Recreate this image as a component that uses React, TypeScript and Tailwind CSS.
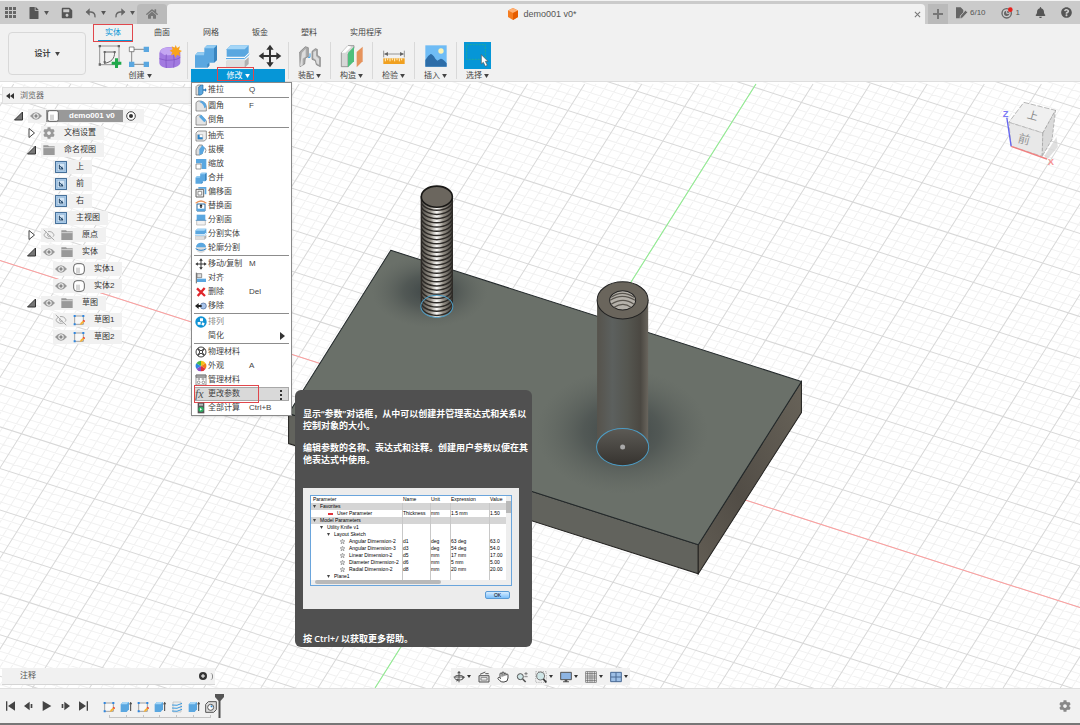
import type { ReactNode } from "react";
import { FaHome, FaBell, FaQuestionCircle, FaSave, FaCog, FaFile } from "react-icons/fa";
import { EyeOff, Hand } from "lucide-react";

const BLUE = "#5aa7e0";
const DARK = "#555";

function Caret() {
  return (
    <svg viewBox="0 0 6 5" className="w-[5px] h-1 shrink-0 fill-current" aria-hidden="true">
      <path d="M0 0h6L3 5z" />
    </svg>
  );
}

function Icon({ size = "w-6 h-6", box = 72, children }: { size?: string; box?: number; children: ReactNode }) {
  return (
    <svg viewBox={`0 0 ${box} ${box}`} className={`${size} shrink-0`} fill="none" aria-hidden="true">
      {children}
    </svg>
  );
}

/* ---------- top bar ---------- */

function TopBar() {
  return (
    <div className="bg-[#cbcbcb] border-t border-[#f3f3f3] flex h-6 pr-0.5 text-[#555] text-[8px]">
      <div className="flex items-center w-[137px] shrink-0 pl-[5px]">
        <button aria-label="Data panel" className="w-[11px]">
          <svg viewBox="0 0 11 11" className="w-[11px] h-[11px]" fill="#666">
            {[0, 4, 8].map((x) => [0, 4, 8].map((y) => <rect key={`${x}-${y}`} x={x} y={y} width="3" height="3" />))}
          </svg>
        </button>
        <button aria-label="File" className="flex items-center gap-1 ml-3">
          <FaFile size={12} />
          <Caret />
        </button>
        <button aria-label="Save" className="ml-3"><FaSave size={12} /></button>
        <button aria-label="Undo" className="flex items-center gap-1 ml-3">
          <Icon size="w-3 h-3" box={36}>
            <path d="M4 15h14q13 1 12 16" stroke="#666" strokeWidth="4" />
            <path d="M2 15L14 4v22z" fill="#666" />
          </Icon>
          <Caret />
        </button>
        <button aria-label="Redo" className="flex items-center gap-1 ml-2">
          <Icon size="w-3 h-3" box={36}>
            <path d="M32 15H18Q5 16 6 31" stroke="#666" strokeWidth="4" />
            <path d="M34 15L22 4v22z" fill="#666" />
          </Icon>
          <Caret />
        </button>
      </div>
      <button aria-label="Home" className="bg-[#bababa] w-[30px] mt-[3px] flex items-center justify-center text-[#777] rounded-t-sm">
        <FaHome size={12} />
      </button>
      <div className="bg-[#f1f1f1] flex-1 mt-[3px] flex items-center rounded-t-sm">
        <div className="flex-1 flex items-center justify-center gap-1 pl-2 text-[9px] text-[#555]">
          <svg viewBox="0 0 12 12" className="w-3 h-3">
            <path d="M6 0l5 2.5v6.5L6 12 1 9V2.5z" fill="#f57c1f" />
            <path d="M6 0l5 2.5L6 5 1 2.5z" fill="#ffb074" />
            <path d="M6 5l5-2.5V9L6 12z" fill="#e65c00" />
          </svg>
          demo001 v0*
        </div>
        <button aria-label="Close" className="w-4 flex justify-center">
          <svg viewBox="0 0 8 8" className="w-[7px] h-[7px]" stroke="#777" strokeWidth="1.2"><path d="M1 1l6 6M7 1L1 7" /></svg>
        </button>
      </div>
      <button aria-label="New design" className="bg-[#bababa] w-5 mt-[3px] ml-[3px] flex items-center justify-center">
        <svg viewBox="0 0 10 10" className="w-[10px] h-[10px]" fill="#777"><path d="M4 0h2v4h4v2H6v4H4V6H0V4h4z" /></svg>
      </button>
      <div className="flex items-center w-[130px] shrink-0 pl-2 pr-1.5 justify-between">
        <span className="flex items-center gap-0.5">
          <svg viewBox="0 0 36 36" className="w-3 h-3" fill="#666">
            <path d="M0 1h14l8 8v8L12 27v7H0z" />
            <path d="M28 10l7 6-16 17-7 2 1-8z" stroke="#cbcbcb" strokeWidth="2" />
          </svg>
          6/10
        </span>
        <span className="flex items-center gap-[3px]">
          <svg viewBox="0 0 36 36" className="w-3 h-3" fill="none">
            <circle cx="17" cy="19" r="14" stroke="#666" strokeWidth="4" />
            <circle cx="17" cy="19" r="8" fill="#666" />
            <path d="M17 11v8h8" stroke="#cbcbcb" strokeWidth="3" />
            <circle cx="28" cy="8" r="7" fill="#e8211d" />
          </svg>
          1
        </span>
        <button aria-label="Notifications"><FaBell size={11} /></button>
        <button aria-label="Help"><FaQuestionCircle size={11} /></button>
      </div>
    </div>
  );
}

/* ---------- toolbar icons ---------- */

const SketchIcon = () => (
  <Icon>
    <path d="M5 6h58v56H5z" stroke="#666" strokeWidth="2" />
    <path d="M20 60V24h30c0 20-10 30-30 34" stroke="#666" strokeWidth="3" />
    <path d="M2 3h7v7H2zM59 3h7v7h-7zM2 58h7v7H2zM17 21h6v6h-6zM47 21h6v6h-6zM17 51h6v6h-6z" fill="#666" />
    <path d="M51 43h9v10h10v9H60v10h-9V62H41v-9h10z" fill="#1fa84a" />
  </Icon>
);

const FormEdgeIcon = () => (
  <Icon>
    <path d="M11 16h44M11 16v45h44" stroke="#555" strokeWidth="2" />
    <path d="M4 9h14v14H4z" fill="#fff" stroke="#555" strokeWidth="2" />
    <path d="M47 8h16v16H47zM3 53h16v16H3zM47 53h16v16H47z" fill={BLUE} />
  </Icon>
);

const PurpleIcon = () => (
  <Icon>
    <path d="M4 28Q6 14 20 11q14-4 30 0 14 3 17 14v32q-2 8-14 12-16 5-32 2Q6 68 4 58z" fill="#a27ae0" />
    <path d="M6 24Q10 13 22 11q14-3 28 0 10 2 15 10l-12 10q-16 4-34 2z" fill="#c4a6f2" />
    <path d="M4 44q20 8 40 4 14-1 23-8M25 31q-2 20 0 41M47 31q3 20 0 40" stroke="#7b50c0" strokeWidth="2" />
    <path d="M53 3l4 9 9-5-3 10 9 4-9 5 4 10-10-4-5 9-4-10-9 3 4-9-8-5 9-4-3-9 9 4z" fill="#f9a31b" />
  </Icon>
);

const CombineShape = () => (
  <>
    <path d="M31 12l8-8h30v44l-9 8H46v9l-6 6H3V34l8-9h20z" fill={BLUE} />
    <path d="M31 12l8-8h30l-9 9H31zM3 34l8-9h20l-1 9z" fill="#93ccf2" />
    <path d="M60 13l9-9v44l-9 8zM40 71l6-6v-9l-6 5z" fill="#3a85bf" />
  </>
);

const SplitShape = () => (
  <>
    <path d="M2 16L14 4h54v22L56 38H2z" fill={BLUE} />
    <path d="M2 16L14 4h54L56 16z" fill="#a5d6f7" />
    <path d="M2 50h54l12-10v20L56 71H2z" fill="#b0b0b0" />
    <path d="M2 50h54v21H2z" fill="#dedede" />
    <path d="M0 44h56l14-13" stroke="#fff" strokeWidth="7" />
    <path d="M0 44h56l14-13" stroke="#3c9be0" strokeWidth="3" />
  </>
);

const MoveShape = () => (
  <path
    d="M36 2l11 15h-8v16h16v-8l15 11-15 11v-8H39v16h8L36 70 25 55h8V39H17v8L2 36l15-11v8h16V17h-8z"
    fill="#333"
  />
);

const AssembleIcon = () => (
  <Icon>
    <path d="M5 24L22 8l9 3v27l-9 4-2 18-14 8z" fill="#aaa" stroke="#777" strokeWidth="2" />
    <path d="M12 26l11-12v24l-9 6v20l-8 3z" fill="#dcdcdc" />
    <path d="M42 22l10-8 6 2v18l9 6v28l-12-6-3-12-10-4z" fill="#aaa" stroke="#777" strokeWidth="2" />
    <path d="M46 24l8-4v16l9 8v18l-7-4-2-10-8-6z" fill="#dcdcdc" />
    <path d="M30 40h6V28" stroke="#3c9be0" strokeWidth="3" />
  </Icon>
);

const ConstructIcon = () => (
  <Icon>
    <path d="M4 26L24 5h18v8L24 30v38H4z" fill="#d7d7d7" stroke="#777" strokeWidth="2" />
    <path d="M24 5L4 26h12L34 8z" fill="#fff" />
    <path d="M24 26L42 8v44L24 70z" fill="#4fbf7c" />
    <path d="M50 24L68 8v44L50 70z" fill="#e6935c" />
  </Icon>
);

const InspectIcon = () => (
  <Icon>
    <path d="M5 20v20M67 20v20M8 30h56" stroke="#666" strokeWidth="2" />
    <path d="M6 30l12-6v12zM66 30l-12-6v12z" fill="#666" />
    <path d="M4 43h64v17H4z" fill="#f0a020" />
    <path d="M10 43v9M17 43v6M24 43v9M31 43v6M38 43v9M45 43v6M52 43v9M59 43v6" stroke="#fff3c8" strokeWidth="3" />
  </Icon>
);

const InsertIcon = () => (
  <Icon>
    <path d="M4 4h64v64H4z" fill="#6fbcf5" />
    <path d="M4 48q8-14 16-18 6 0 14 14l6 6 10-6q8 0 18 14v10H4z" fill="#2d6da8" />
    <circle cx="51" cy="21" r="8" fill="#fdf3b4" />
  </Icon>
);

const SelectIcon = () => (
  <span className="bg-[#0696d7] w-[27px] h-[27px] shrink-0">
    <Icon size="w-[27px] h-[27px]" box={81}>
      <path d="M8 8h56v44H8z" stroke="#2eb37d" strokeWidth="2" strokeDasharray="6 3" />
      <path d="M52 38v28l6-5 6 12 6-3-6-12h8z" fill="#fff" stroke="#555" strokeWidth="2" />
    </Icon>
  </span>
);

/* ---------- modify menu ---------- */

type MenuEntry = { label: string; keys?: string; icon?: ReactNode; disabled?: boolean; sub?: boolean; active?: boolean };

const OUT = "#666";

const menuGroups: MenuEntry[][] = [
  [
    {
      label: "推拉",
      keys: "Q",
      icon: (
        <>
          <path d="M3 8l5-5h10v26l-5 4H3z" fill="#ddd" stroke={OUT} strokeWidth="2" />
          <path d="M11 9l8-6h5v25l-6 5h-7z" fill={BLUE} stroke="#27699c" strokeWidth="2" />
          <path d="M24 16h6v-4l5 6-5 6v-4h-6z" fill="#2a78b8" />
        </>
      ),
    },
  ],
  [
    {
      label: "圆角",
      keys: "F",
      icon: (
        <>
          <path d="M3 33V8l6-5h8q16 3 17 18v12z" fill="#e4e4e4" stroke={OUT} strokeWidth="2" />
          <path d="M13 6l6-4q15 4 15 19l-6 4Q27 11 13 6z" fill={BLUE} />
        </>
      ),
    },
    {
      label: "倒角",
      icon: (
        <>
          <path d="M3 33V8l6-5h8l17 18v12z" fill="#e4e4e4" stroke={OUT} strokeWidth="2" />
          <path d="M12 8l7-6 15 17-6 6z" fill={BLUE} />
        </>
      ),
    },
  ],
  [
    {
      label: "抽壳",
      icon: (
        <>
          <path d="M3 9l6-6h25v24l-6 6H3z" fill="#eee" stroke={OUT} strokeWidth="2" />
          <path d="M8 14h15v14H8z" fill="#fff" stroke={OUT} />
          <path d="M8 14h6v8h9v6H8z" fill="#2a82c8" />
        </>
      ),
    },
    {
      label: "拔模",
      icon: (
        <>
          <path d="M3 33V18L12 3h10v26l-8 4z" fill="#ddd" stroke={OUT} strokeWidth="2" />
          <path d="M13 16L22 4l8 7-7 18-10 4z" fill={BLUE} />
          <path d="M30 12q6 6 0 15" stroke={OUT} strokeWidth="2" />
        </>
      ),
    },
    {
      label: "缩放",
      icon: (
        <>
          <path d="M3 3h31v30H20V16H3z" fill={BLUE} />
          <path d="M3 18h15v15H3z" fill="#fff" stroke={OUT} strokeWidth="2" />
        </>
      ),
    },
    { label: "合并", icon: <svg viewBox="0 0 72 72" width="36" height="36"><CombineShape /></svg> },
    {
      label: "偏移面",
      icon: (
        <>
          <path d="M10 3h24v22h-5V8H10z" fill={BLUE} />
          <path d="M3 10h23v23H3z" fill="#eee" stroke={OUT} strokeWidth="3" />
          <path d="M9 16h11v11H9z" fill="#fff" stroke={OUT} strokeWidth="2" />
        </>
      ),
    },
    {
      label: "替换面",
      icon: (
        <>
          <path d="M2 10Q18-4 34 10" stroke="#e8945a" strokeWidth="4" />
          <path d="M6 12h24v21H6z" fill="#fff" stroke="#27699c" strokeWidth="3" />
          <path d="M6 26h24v7H6z" fill={BLUE} />
          <path d="M18 12l5 7h-3v5h-4v-5h-3z" fill="#222" />
        </>
      ),
    },
    {
      label: "分割面",
      icon: (
        <>
          <path d="M5 2h26v17H5z" fill={BLUE} />
          <path d="M5 19h26v14H5z" fill="#f2f2f2" stroke="#aaa" strokeWidth="2" />
          <path d="M2 19h32" stroke="#2a82c8" strokeWidth="2" />
        </>
      ),
    },
    { label: "分割实体", icon: <svg viewBox="0 0 72 72" width="36" height="36"><SplitShape /></svg> },
    {
      label: "轮廓分割",
      icon: (
        <>
          <circle cx="18" cy="18" r="15" fill="#ddd" />
          <path d="M3 16a15 14 0 0 1 30 0z" fill={BLUE} />
          <path d="M2 20q16 10 32 0" stroke="#2a82c8" strokeWidth="3" />
        </>
      ),
    },
  ],
  [
    { label: "移动/复制", keys: "M", icon: <svg viewBox="0 0 72 72" width="36" height="36"><MoveShape /></svg> },
    {
      label: "对齐",
      icon: (
        <>
          <path d="M4 2v32" stroke={OUT} strokeWidth="3" />
          <path d="M6 5h14v12H6z" fill="#ddd" stroke={OUT} strokeWidth="2" />
          <path d="M6 20h27v10H6z" fill={BLUE} />
        </>
      ),
    },
    { label: "删除", keys: "Del", icon: <path d="M6 7l24 23M29 6L8 30" stroke="#e0262b" strokeWidth="7" /> },
    {
      label: "移除",
      icon: (
        <>
          <circle cx="25" cy="18" r="9" fill="#a9c4ea" stroke="#41618f" strokeWidth="2" />
          <path d="M0 18l11-9v6h9v6h-9v6z" fill="#222" />
        </>
      ),
    },
  ],
  [
    {
      label: "排列",
      disabled: true,
      icon: (
        <>
          <circle cx="18" cy="18" r="17" fill="#1193d4" />
          <path d="M15 7h9v9h-9zM8 18h9v8H8zM22 19l7 3-3 7-7-3z" fill="#fff" />
        </>
      ),
    },
    { label: "简化", sub: true },
  ],
  [
    {
      label: "物理材料",
      icon: (
        <>
          <circle cx="18" cy="18" r="15" fill="#fff" stroke="#444" strokeWidth="3" />
          <circle cx="18" cy="18" r="5" stroke="#444" strokeWidth="3" />
          <path d="M8 8l6 6M28 8l-6 6M8 28l6-6M28 28l-6-6" stroke="#444" strokeWidth="5" />
        </>
      ),
    },
    {
      label: "外观",
      keys: "A",
      icon: (
        <>
          <path d="M18 18V2a16 16 0 0 1 14 8z" fill="#f6c217" />
          <path d="M18 18l14-8a16 16 0 0 1 0 16z" fill="#f07d1a" />
          <path d="M18 18l14 8a16 16 0 0 1-14 8z" fill="#e0343b" />
          <path d="M18 18v16a16 16 0 0 1-14-8z" fill="#8e4fc2" />
          <path d="M18 18L4 26a16 16 0 0 1 0-16z" fill="#2e86e0" />
          <path d="M18 18L4 10a16 16 0 0 1 14-8z" fill="#45b649" />
        </>
      ),
    },
    {
      label: "管理材料",
      icon: (
        <>
          <path d="M3 3h30v30H3z" fill="#fff" stroke={OUT} strokeWidth="2" />
          <path d="M3 3h30v7H3z" fill="#aaa" stroke={OUT} strokeWidth="2" />
          <path d="M8 15h7M20 15h8" stroke={OUT} strokeWidth="3" />
          <circle cx="11" cy="25" r="4" stroke={OUT} strokeWidth="2" />
          <circle cx="25" cy="25" r="4" stroke={OUT} strokeWidth="2" />
        </>
      ),
    },
    { label: "更改参数", active: true },
    {
      label: "全部计算",
      keys: "Ctrl+B",
      icon: (
        <>
          <path d="M8 2h20v32H8z" fill="#555" />
          <path d="M12 5h12v6H12z" fill="#b9b9b9" />
          <circle cx="18" cy="22" r="8" fill="#2eb062" />
          <path d="M15 18v8l6-4z" fill="#fff" />
        </>
      ),
    },
  ],
];

const params = [
  { level: 0, name: "Favorites", group: true },
  { level: 2, name: "User Parameter", cells: ["Thickness", "mm", "1.5 mm", "1.50"], mark: true },
  { level: 0, name: "Model Parameters", group: true },
  { level: 1, name: "Utility Knife v1" },
  { level: 2, name: "Layout Sketch" },
  { level: 3, name: "Angular Dimension-2", cells: ["d1", "deg", "63 deg", "63.0"] },
  { level: 3, name: "Angular Dimension-3", cells: ["d3", "deg", "54 deg", "54.0"] },
  { level: 3, name: "Linear Dimension-2", cells: ["d5", "mm", "17 mm", "17.00"] },
  { level: 3, name: "Diameter Dimension-2", cells: ["d6", "mm", "5 mm", "5.00"] },
  { level: 3, name: "Radial Dimension-2", cells: ["d8", "mm", "20 mm", "20.00"] },
  { level: 2, name: "Plane1" },
];

const indents = ["pl-0.5", "pl-[9px]", "pl-4", "pl-[29px]"];

function ParameterDialog() {
  return (
    <div className="bg-[#ececec] w-[216px] h-[121px] pt-[7px] px-[7px] text-[5px] leading-[7px] text-black">
      <div className="border border-[#6aa5dc] bg-white flex">
        <div className="flex-1 overflow-hidden">
          <table className="table-fixed w-full border-collapse text-left">
            <thead>
              <tr className="h-[7px]">
                <th className="w-[92px] p-0 font-normal pl-0.5">Parameter</th>
                <th className="w-7 p-0 font-normal">Name</th>
                <th className="w-5 p-0 font-normal">Unit</th>
                <th className="w-[39px] p-0 font-normal">Expression</th>
                <th className="p-0 font-normal">Value</th>
              </tr>
            </thead>
            <tbody>
              {params.map((p) => (
                <tr key={p.name} className={p.group ? "h-[7px] bg-[#d5d5d5]" : "h-[7px]"}>
                  <td className="p-0">
                    <div className={`flex items-center gap-1 h-[7px] whitespace-nowrap ${indents[p.level]}`}>
                      {p.mark ? (
                        <span className="w-[5px] h-0.5 bg-[#e0343b] ml-px" />
                      ) : p.cells ? (
                        <svg viewBox="0 0 10 10" className="w-[5px] h-[5px]" fill="#ddd" stroke="#777">
                          <path d="M5 0l1.5 3.5H10L7 6l1 4-3-2.5L2 10l1-4-3-2.5h3.500z" />
                        </svg>
                      ) : (
                        <svg viewBox="0 0 6 6" className="w-[3px] h-[3px]" fill="#444"><path d="M0 0h6L3 6z" /></svg>
                      )}
                      {p.name}
                    </div>
                  </td>
                  {[0, 1, 2, 3].map((i) => (
                    <td key={i} className="p-0 whitespace-nowrap shadow-[-1px_0_0_#c8c8c8]">
                      <div className="h-[7px]">{p.cells?.[i]}</div>
                    </td>
                  ))}
                </tr>
              ))}
            </tbody>
          </table>
          <div className="h-[5px] bg-[#eee]"><div className="ml-1 w-[126px] h-1 rounded bg-[#b9b9b9]" /></div>
        </div>
        <div className="w-[5px] bg-[#eee] pt-[5px]"><div className="h-3 bg-[#b9b9b9]" /></div>
      </div>
      <div className="flex justify-end mt-[5px] pr-0.5">
        <button className="w-[25px] h-2 rounded-xs border border-[#5b9bd5] bg-linear-to-b from-[#d6ecff] to-[#7cc0fb] leading-[6px]">OK</button>
      </div>
    </div>
  );
}

function HelpTip() {
  return (
    <div
      role="tooltip"
      className="absolute left-full top-[3px] ml-1.5 w-[237px] bg-[#505050] rounded-md px-2 pt-[18px] pb-0.5 text-left text-white text-[9px] leading-3 font-semibold font-['Open_Sans','Noto_Sans_CJK_SC',sans-serif]"
    >
      <p className="whitespace-nowrap">显示“参数”对话框，从中可以创建并管理表达式和关系以<br />控制对象的大小。</p>
      <p className="whitespace-nowrap mt-[10px] mb-[22px]">编辑参数的名称、表达式和注释。创建用户参数以便在其<br />他表达式中使用。</p>
      <div className="font-normal font-['Liberation_Sans',sans-serif]"><ParameterDialog /></div>
      <p className="mt-6">按 Ctrl+/ 以获取更多帮助。</p>
    </div>
  );
}

function MenuRow({ entry }: { entry: MenuEntry }) {
  return (
    <li className={entry.active ? "relative bg-[#d9d9d9] outline outline-[#a8a8a8] -outline-offset-1" : "relative"}>
      <button
        className={`flex items-center w-full h-[14px] pl-px text-left whitespace-nowrap ${entry.disabled ? "text-[#888]" : "text-[#444]"}`}
        disabled={entry.disabled}
      >
        <span className="w-[13px] h-3 shrink-0 flex items-center">
          {entry.icon && <Icon size="w-3 h-3" box={36}>{entry.icon}</Icon>}
          {entry.active && <i className="font-['Liberation_Serif',serif] text-[12px] leading-3 text-[#555]">fx</i>}
        </span>
        <span className="w-[41px] shrink-0">{entry.label}</span>
        <span className="flex-1">{entry.keys}</span>
        {entry.sub && <svg viewBox="0 0 5 8" className="w-[5px] h-2 mr-1"><path d="M0 0l5 4-5 4z" fill="#333" /></svg>}
        {entry.active && (
          <svg viewBox="0 0 3 11" className="w-[3px] h-[11px] mr-1.5" fill="#333">
            <rect width="2" height="2" y="1" /><rect width="2" height="2" y="5" /><rect width="2" height="2" y="9" />
          </svg>
        )}
      </button>
      {entry.active && (
        <>
          <span className="absolute -inset-y-0.5 left-0 w-[65px] border border-[#e0474c]" />
          <HelpTip />
        </>
      )}
    </li>
  );
}

function ModifyMenu() {
  return (
    <div className="absolute z-20 left-0 top-full w-[101px] bg-white border border-[#8a8a8a] px-0.5 shadow-sm">
      {menuGroups.map((group, i) => (
        <ul key={i} className={i > 0 ? "border-t border-[#8c8c8c] pt-px" : ""}>
          {group.map((entry) => <MenuRow key={entry.label} entry={entry} />)}
        </ul>
      ))}
    </div>
  );
}

/* ---------- toolbar ---------- */

function Group({ label, width = "w-[41px]", children }: { label: string; width?: string; children: ReactNode }) {
  return (
    <div className={`${width} shrink-0 flex flex-col`}>
      <div className="h-[27px] flex items-center justify-center gap-1.5">{children}</div>
      <button className="h-[13px] flex items-center justify-center gap-0.5">
        {label} <Caret />
      </button>
    </div>
  );
}

const Divider = () => <div className="w-px h-[37px] bg-[#d9d9d9] shrink-0" />;

function Toolbar() {
  return (
    <header className="bg-[#f1f1f1] border-b border-[#dedede] flex h-[58px] text-[8px] text-[#444]">
      <button className="ml-2 mt-2 w-[78px] h-[43px] shrink-0 border border-[#d8d8d8] rounded font-bold flex items-center justify-center gap-1">
        设计 <Caret />
      </button>
      <div className="ml-[7px] flex-1">
        <nav className="flex gap-[11px] h-[18px] pl-px">
          {["实体", "曲面", "网格", "钣金", "塑料", "实用程序"].map((tab, i) => (
            <button
              key={tab}
              className={i === 0 ? "relative px-[11px] border border-[#e0474c] text-[#0696d7] -mx-px" : "px-[11px]"}
            >
              {tab}
              {i === 0 && <span className="absolute bottom-0 left-1 right-0 h-px bg-[#0696d7]" />}
            </button>
          ))}
        </nav>
        <div className="flex">
          <Group label="创建" width="w-[94px]">
            <SketchIcon /><FormEdgeIcon /><PurpleIcon />
          </Group>
          <Divider />
          <div className="relative mx-[3px] w-[94px] shrink-0">
            <div className="h-[27px] flex items-center justify-center gap-2">
              <Icon><CombineShape /></Icon>
              <Icon><SplitShape /></Icon>
              <Icon><MoveShape /></Icon>
            </div>
            <button aria-expanded="true" className="relative w-full h-[13px] bg-[#0696d7] text-white flex items-center justify-center gap-0.5">
              修改 <Caret />
              <span className="absolute -top-0.5 left-[26px] w-[37px] h-[14px] border border-[#e0474c]" />
            </button>
            <ModifyMenu />
          </div>
          <Divider />
          <Group label="装配"><AssembleIcon /></Group>
          <Divider />
          <Group label="构造"><ConstructIcon /></Group>
          <Divider />
          <Group label="检验"><InspectIcon /></Group>
          <Divider />
          <Group label="插入"><InsertIcon /></Group>
          <Divider />
          <Group label="选择"><SelectIcon /></Group>
        </div>
      </div>
    </header>
  );
}

/* ---------- model canvas ---------- */

function gridPath(major: boolean) {
  let d = "";
  for (let k = -75; k <= 75; k++) {
    if ((k % 5 === 0) !== major) continue;
    const y = 261 + k * 8.3;
    d += `M0 ${y.toFixed(1)}L1080 ${(y + 347).toFixed(1)}`;
    const x = 755.6 + k * 11.4;
    d += `M${x.toFixed(1)} 85L${(x - 380.3).toFixed(1)} 688`;
  }
  return d;
}

const threads = Array.from({ length: 26 }, (_, i) => 201 + i * 4.2);

function Scene() {
  return (
    <svg viewBox="0 83 1080 605" preserveAspectRatio="xMidYMid slice" className="absolute inset-0 w-full h-full" fill="none" aria-label="demo001 model">
      <defs>
        <radialGradient id="shade">
          <stop offset="0" stopColor="#3b4344" stopOpacity="0.95" />
          <stop offset="0.45" stopColor="#454c4b" stopOpacity="0.65" />
          <stop offset="1" stopColor="#5a605b" stopOpacity="0" />
        </radialGradient>
        <linearGradient id="tube">
          <stop offset="0" stopColor="#56534c" />
          <stop offset="0.3" stopColor="#5c605e" />
          <stop offset="0.6" stopColor="#555650" />
          <stop offset="0.85" stopColor="#4b4842" />
          <stop offset="1" stopColor="#69655d" />
        </linearGradient>
        <linearGradient id="bolt">
          <stop offset="0" stopColor="#4a4741" />
          <stop offset="0.3" stopColor="#9a958c" />
          <stop offset="0.5" stopColor="#fbfaf8" />
          <stop offset="0.7" stopColor="#948f86" />
          <stop offset="1" stopColor="#403d38" />
        </linearGradient>
        <linearGradient id="side" x1="0" y1="1" x2="1" y2="0">
          <stop offset="0" stopColor="#625d54" />
          <stop offset="0.4" stopColor="#524d46" />
          <stop offset="1" stopColor="#686359" />
        </linearGradient>
        <linearGradient id="foot" x1="0" y1="0" x2="0" y2="1">
          <stop offset="0" stopColor="#5c5a55" />
          <stop offset="1" stopColor="#36332f" />
        </linearGradient>
        <clipPath id="plate"><path d="M391 251l410 131-103 163-409-131z" /></clipPath>
        <clipPath id="shaft"><path d="M421 190h32v117a16 11 0 0 1-32 0z" /></clipPath>
      </defs>
      <rect y="83" width="1080" height="605" fill="#fff" />
      <path d={gridPath(false)} stroke="#f1f1f1" />
      <path d={gridPath(true)} stroke="#d8d8d8" />
      <path d="M0 261L1080 608" stroke="#ff9c9c" />
      <path d="M755.6 85L375.3 688" stroke="#8df08d" />

      <path d="M289 414l409 131v29L289 444z" fill="#62635d" stroke="#22211f" />
      <path d="M801 382v31L698 574v-29z" fill="url(#side)" stroke="#22211f" />
      <path d="M391 251l410 131-103 163-409-131z" fill="#6a7069" stroke="#22282a" />
      <g clipPath="url(#plate)">
        <ellipse cx="430" cy="292" rx="58" ry="36" fill="url(#shade)" />
        <ellipse cx="622" cy="432" rx="86" ry="62" fill="url(#shade)" />
      </g>

      <path d="M421 197v110a16 11 0 0 0 32 0V197z" fill="url(#bolt)" />
      <g clipPath="url(#shaft)">
        {threads.map((y) => (
          <path key={y} d={`M421 ${y}a16 10 0 0 0 32 0`} stroke="#2d2a27" strokeWidth="1.5" />
        ))}
      </g>
      <path d="M421.5 197v108M452.5 197v108" stroke="#2d2a27" />
      <ellipse cx="437" cy="197.5" rx="15.5" ry="10.5" fill="#6b665e" stroke="#191816" strokeWidth="1.6" />
      <ellipse cx="437" cy="307" rx="16" ry="11" stroke="#4d9cc4" />

      <path d="M597 301v147a25.500 18 0 0 0 51 0V301z" fill="url(#tube)" />
      <ellipse cx="622.5" cy="447.5" rx="26" ry="18.5" fill="url(#foot)" stroke="#4d9cc4" />
      <circle cx="622.5" cy="447.5" r="2.5" fill="#a9a9a9" />
      <ellipse cx="622.5" cy="301" rx="25.5" ry="18.5" fill="#6a655c" stroke="#222" />
      <ellipse cx="622.5" cy="301" rx="13" ry="9.5" fill="#b5b1aa" stroke="#222" />
      <path d="M611 298q11-8 23 0M610 301q12-8 25 0M611 305q12-8 23 0M614 308q9-6 17 0" stroke="#5a564f" strokeWidth="1.2" />
    </svg>
  );
}

function ViewCube() {
  return (
    <svg viewBox="430 300 170 210" className="w-[57px] h-[70px] mt-[17px] mr-[22px]" aria-label="View cube">
      <path d="M560 470l36-56 4 30-34 40z" fill="#ccc" opacity="0.6" />
      <path d="M498 310l95 24-38 68-102-32z" fill="#f0f0f0" stroke="#999" strokeWidth="2" strokeDasharray="16 5" />
      <path d="M453 370l102 32-2 70-93-30z" fill="#e8e8e8" stroke="#aaa" strokeWidth="2" strokeDasharray="16 5" />
      <path d="M555 402l38-68-10 86-30 52z" fill="#dadada" stroke="#999" strokeWidth="2" strokeDasharray="10 5" />
      <text x="508" y="360" fontSize="32" fill="#888" transform="rotate(16 520 350)">上</text>
      <text x="480" y="434" fontSize="36" fill="#999" transform="rotate(14 500 424)">前</text>
      <path d="M447 356l13 86" stroke="#6464f0" strokeWidth="4" />
      <path d="M460 442l107 38" stroke="#f08080" strokeWidth="4" />
      <text x="435" y="354" fontSize="28" fontWeight="bold" fill="#7a7af5">Z</text>
      <text x="570" y="497" fontSize="28" fontWeight="bold" fill="#f59090">X</text>
    </svg>
  );
}

/* ---------- browser tree ---------- */

type Node = { label: string; depth: 0 | 1 | 2; toggle?: "open" | "closed"; eye?: "on" | "off"; icon: "gear" | "folder" | "view" | "body" | "sketch" | "root" };

const nodes: Node[] = [
  { label: "demo001 v0", depth: 0, toggle: "open", eye: "on", icon: "root" },
  { label: "文档设置", depth: 1, toggle: "closed", icon: "gear" },
  { label: "命名视图", depth: 1, toggle: "open", icon: "folder" },
  { label: "上", depth: 2, icon: "view" },
  { label: "前", depth: 2, icon: "view" },
  { label: "右", depth: 2, icon: "view" },
  { label: "主视图", depth: 2, icon: "view" },
  { label: "原点", depth: 1, toggle: "closed", eye: "off", icon: "folder" },
  { label: "实体", depth: 1, toggle: "open", eye: "on", icon: "folder" },
  { label: "实体1", depth: 2, eye: "on", icon: "body" },
  { label: "实体2", depth: 2, eye: "on", icon: "body" },
  { label: "草图", depth: 1, toggle: "open", eye: "on", icon: "folder" },
  { label: "草图1", depth: 2, eye: "off", icon: "sketch" },
  { label: "草图2", depth: 2, eye: "on", icon: "sketch" },
];

const depthPad = ["pl-[14px]", "pl-[27px]", "pl-[53px]"];

const SketchGlyph = () => (
  <>
    <path d="M5 6h26v25H5z" stroke="#777" strokeWidth="2" fill="#f8f8f8" />
    <path d="M2 3h6v6H2zM28 3h6v6h-6zM2 28h6v6H2z" fill="#2e86e0" />
    <path d="M20 33l3-7 8-7 4 4-8 8z" fill="#f8b133" />
    <path d="M29 20l3-3 5 4-3 3z" fill="#e8413c" />
  </>
);

function NodeIcon({ icon }: { icon: Node["icon"] }) {
  if (icon === "gear") return <FaCog size={12} color="#999" className="shrink-0" />;
  return (
    <Icon size="w-3 h-3" box={36}>
      {icon === "folder" && (
        <>
          <path d="M1 4h14l3 3h17v26H1z" fill="#999" />
          <path d="M1 11h34" stroke="#f1f1f1" strokeWidth="2" />
        </>
      )}
      {icon === "view" && (
        <>
          <path d="M1 1h34v34H1z" fill="#a9cbea" stroke="#2f5d8a" strokeWidth="3" />
          <path d="M7 7h22v22H7z" fill="#d4e6f6" stroke="#5a86b0" />
          <path d="M13 11v13h12M13 14l11 10M21 17v7" stroke="#1f4468" strokeWidth="3" />
        </>
      )}
      {(icon === "body" || icon === "root") && (
        <>
          <rect x="2" y="2" width="32" height="32" rx={icon === "body" ? 10 : 6} fill="#fff" stroke="#666" strokeWidth="3" />
          <path d="M9 14h12v16H9z" fill="#d5d5d5" />
        </>
      )}
      {icon === "sketch" && <SketchGlyph />}
    </Icon>
  );
}

function TreeRow({ node }: { node: Node }) {
  const root = node.icon === "root";
  return (
    <li className={`flex items-center h-[17px] ${depthPad[node.depth]}`}>
      {node.toggle && (
        <button aria-label={`Toggle ${node.label}`} className="w-[14px] shrink-0">
          <svg viewBox="0 0 9 10" className="w-[9px] h-[10px]">
            {node.toggle === "open" ? (
              <path d="M8.5 1v8H.5z" fill="#777" stroke="#333" />
            ) : (
              <path d="M2 .5v9L7.5 5z" fill="#fff" stroke="#444" />
            )}
          </svg>
        </button>
      )}
      <div className="flex items-center h-[14px] bg-[#f1f1f1] pl-0.5 pr-2">
        {node.eye && (
          <span className={root ? "w-4 shrink-0" : "w-[18px] shrink-0"}>
            {node.eye === "on" ? (
              <svg viewBox="0 0 36 24" className="w-3 h-2">
                <path d="M0 12Q18-10 36 12 18 34 0 12z" fill="#999" />
                <circle cx="18" cy="12" r="8" fill="#f1f1f1" />
                <circle cx="18" cy="12" r="5" fill="#888" />
              </svg>
            ) : (
              <EyeOff size={12} strokeWidth={2} color="#aaa" />
            )}
          </span>
        )}
        {root ? (
          <>
            <span className="flex items-center gap-[10px] h-3 bg-[#999] pl-px pr-2 text-white font-bold whitespace-nowrap">
              <NodeIcon icon="root" />
              demo001 v0
            </span>
            <svg viewBox="0 0 10 10" className="w-[10px] h-[10px] ml-[3px]" fill="none">
              <circle cx="5" cy="5" r="4.3" stroke="#444" fill="#fff" />
              <circle cx="5" cy="5" r="2" fill="#333" />
            </svg>
          </>
        ) : (
          <>
            <NodeIcon icon={node.icon} />
            <span className="ml-[9px] whitespace-nowrap">{node.label}</span>
          </>
        )}
      </div>
    </li>
  );
}

function Browser() {
  return (
    <aside className="w-[213px] ml-0.5 mt-[5px] text-[8px] text-[#333]">
      <div className="flex items-center gap-1.5 h-[17px] bg-[#f1f1f1] border border-[#e0e0e0] pl-[3px] text-[#666]">
        <button aria-label="Collapse">
          <svg viewBox="0 0 8 6" className="w-2 h-1.5"><path d="M4 0v6L0 3zM8 0v6L4 3z" fill="#333" /></svg>
        </button>
        浏览器
      </div>
      <ul className="mt-[3px] -ml-0.5">
        {nodes.map((node) => <TreeRow key={node.label + node.depth} node={node} />)}
      </ul>
    </aside>
  );
}

/* ---------- bottom bars ---------- */

const navTools: { name: string; caret?: boolean; icon: ReactNode }[] = [
  {
    name: "Orbit",
    caret: true,
    icon: (
      <>
        <path d="M18 2v32M2 18h32" stroke={DARK} strokeWidth="3" />
        <ellipse cx="18" cy="20" rx="13" ry="7" stroke={DARK} strokeWidth="3" />
        <path d="M12 7l6-7 6 7zM28 14l8 5-8 6zM12 22l-2 10 8-5z" fill={DARK} />
      </>
    ),
  },
  {
    name: "Look at",
    icon: (
      <>
        <path d="M3 14h30v19H3z" fill="#ddd" stroke={DARK} strokeWidth="3" />
        <path d="M9 20h18v7H9z" fill="#fff" stroke={DARK} strokeWidth="2" />
        <path d="M6 10L22 3M22 8h10" stroke={DARK} strokeWidth="3" />
      </>
    ),
  },
  { name: "Pan", icon: <Hand size={36} strokeWidth={2} color="#444" fill="#fff" /> },
  {
    name: "Zoom",
    icon: (
      <>
        <circle cx="13" cy="17" r="9" fill="#cfe5e6" stroke={DARK} strokeWidth="3" />
        <path d="M20 24l9 9" stroke={DARK} strokeWidth="5" />
        <path d="M25 8h10M30 3v10M25 17h10" stroke={DARK} strokeWidth="2" />
      </>
    ),
  },
  {
    name: "Fit",
    caret: true,
    icon: (
      <>
        <path d="M2 2h32v32H2z" stroke="#999" strokeWidth="2" strokeDasharray="4 3" />
        <circle cx="17" cy="15" r="12" fill="#cfe5e6" stroke="#777" strokeWidth="3" />
        <path d="M25 24l9 10" stroke="#333" strokeWidth="5" />
      </>
    ),
  },
  {
    name: "Display settings",
    caret: true,
    icon: (
      <>
        <path d="M2 4h32v22H2z" fill="#8db4e2" stroke={DARK} strokeWidth="3" />
        <path d="M14 26h8v5h5v3H9v-3h5z" fill={DARK} />
      </>
    ),
  },
  {
    name: "Grid and snaps",
    caret: true,
    icon: <path d="M2 2h32v32H2zM8 2v32M15 2v32M21 2v32M28 2v32M2 8h32M2 15h32M2 21h32M2 28h32" fill="#fff" stroke={DARK} strokeWidth="2" />,
  },
  {
    name: "Viewports",
    caret: true,
    icon: <path d="M2 4h32v28H2zM18 4v28M2 18h32" fill="#9dbfe6" stroke="#4a6a94" strokeWidth="3" />,
  },
];

function CanvasFooter() {
  return (
    <div className="grid grid-cols-[1fr_auto_1fr] items-center px-0.5 pb-[3px] text-[8px] text-[#555]">
      <div className="flex items-center w-[213px] h-[17px] bg-[#f1f1f1] border-b border-[#d5d5d5] pl-[18px] pr-0.5">
        <span className="flex-1">注释</span>
        <button aria-label="Add comment">
          <svg viewBox="0 0 8 8" className="w-2 h-2"><circle cx="4" cy="4" r="4" fill="#333" /><path d="M4 2v4M2 4h4" stroke="#fff" /></svg>
        </button>
        <span className="ml-[3px] w-[3px] h-[7px] border-r border-[#888] rounded-r" />
      </div>
      <div className="flex items-center gap-[7px] h-[17px] bg-[#f1f1f1] px-0.5">
        {navTools.map((tool) => (
          <button key={tool.name} aria-label={tool.name} className="flex items-center gap-0.5 text-[#333]">
            <Icon size="w-3 h-3" box={36}>{tool.icon}</Icon>
            {tool.caret && <svg viewBox="0 0 4 3" className="w-1 h-[3px] fill-current"><path d="M0 0h4L2 3z" /></svg>}
          </button>
        ))}
      </div>
    </div>
  );
}

const playback = [
  { name: "Go to start", d: "M3 4h4v28H3zM30 4v28L9 18z" },
  { name: "Step back", d: "M20 5v26L3 18zM23 12h5v12h-5z" },
  { name: "Play", d: "M5 3v30l26-15z" },
  { name: "Step forward", d: "M16 5v26l17-13zM8 12h5v12H8z" },
  { name: "Go to end", d: "M29 4h4v28h-4zM6 4v28l21-14z" },
];

const features = ["sketch", "extrude", "sketch", "extrude", "thread", "extrude", "hole"];

function FeatureGlyph({ kind }: { kind: string }) {
  if (kind === "sketch") return <SketchGlyph />;
  if (kind === "extrude")
    return (
      <>
        <path d="M2 10l7-7h18v22l-7 8H2z" fill={BLUE} />
        <path d="M2 10l7-7h18l-7 7z" fill="#a5d6f7" />
        <path d="M32 30V6M29 10l3-6 3 6" stroke="#444" strokeWidth="3" />
      </>
    );
  if (kind === "thread")
    return (
      <>
        <path d="M6 3h24v30H6z" fill="#eee" stroke="#bbb" strokeWidth="2" />
        <path d="M3 12q15 4 30-5M3 21q15 4 30-5M3 30q15 4 30-5" stroke="#3c9be0" strokeWidth="3" />
      </>
    );
  return (
    <>
      <path d="M2 10l8-8h24v24l-8 8H2z" fill="#ddd" stroke="#555" strokeWidth="3" />
      <circle cx="17" cy="19" r="9" fill="#fff" stroke="#555" strokeWidth="3" />
      <path d="M17 19v-6a6 6 0 0 1 6 6z" fill="#2a82c8" />
    </>
  );
}

function Timeline() {
  return (
    <footer className="flex items-center h-[37px] bg-[#f1f1f1] border-t border-[#e0e0e0] border-b-2 border-b-[#777] pl-[5px] pr-[9px]">
      <div className="flex gap-1.5">
        {playback.map((p) => (
          <button key={p.name} aria-label={p.name}>
            <Icon size="w-3 h-3" box={36}><path d={p.d} fill="#444" /></Icon>
          </button>
        ))}
      </div>
      <div className="ml-[14px] mt-1.5">
        <div className="flex gap-[5px]">
          {features.map((kind, i) => (
            <button key={i} aria-label={`${kind} ${i + 1}`}>
              <Icon size="w-3 h-3" box={36}><FeatureGlyph kind={kind} /></Icon>
            </button>
          ))}
        </div>
        <div className="flex mx-1.5 mt-0.5 h-[3px] border-b border-l border-[#c4c4c4]">
          {[1, 2, 3, 4, 5, 6].map((n) => <span key={n} className="flex-1 border-r border-[#c4c4c4]" />)}
        </div>
      </div>
      <svg viewBox="0 0 9 24" className="w-[9px] h-6 -ml-0.5" fill="#555"><path d="M0 0h9v3L5.5 7v17h-2V7L0 3z" /></svg>
      <button aria-label="Settings" className="ml-auto text-[#888]"><FaCog size={12} /></button>
    </footer>
  );
}

export default function App() {
  return (
    <div className="min-h-screen flex flex-col bg-white font-['Liberation_Sans','Noto_Sans_CJK_SC',sans-serif] leading-none">
      <TopBar />
      <Toolbar />
      <main className="relative flex-1 flex flex-col overflow-hidden">
        <Scene />
        <div className="relative flex-1 flex justify-between items-start">
          <Browser />
          <ViewCube />
        </div>
        <div className="relative"><CanvasFooter /></div>
      </main>
      <Timeline />
    </div>
  );
}
